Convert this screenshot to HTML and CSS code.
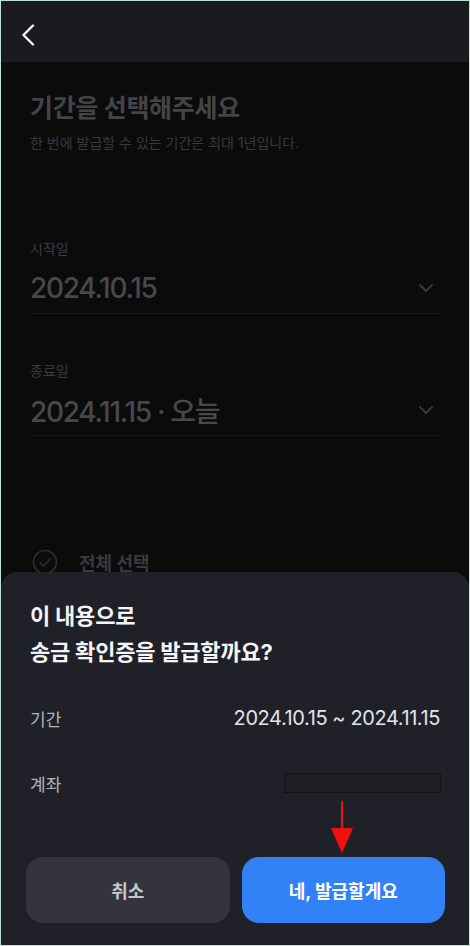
FILE: index.html
```html
<!DOCTYPE html>
<html lang="ko">
<head>
    <meta charset="UTF-8">
    <meta name="viewport" content="width=device-width, initial-scale=1.0">
    <title>송금 확인증 발급</title>
    <link rel="stylesheet" href="styles.css">
</head>
<body>
    <div class="screen">
        <header class="top-bar">
            <button class="back-btn" aria-label="뒤로">
                <svg width="14" height="22" viewBox="0 0 14 22">
                    <path d="M12 1.5 L2.5 11 L12 20.5" fill="none" stroke="#f2f2f4" stroke-width="2.4" stroke-linecap="round" stroke-linejoin="round"/>
                </svg>
            </button>
        </header>

        <main class="page">
            <h1 class="page-title">기간을 선택해주세요</h1>
            <p class="page-desc">한 번에 발급할 수 있는 기간은 최대 1년입니다.</p>

            <div class="field">
                <span class="field-label">시작일</span>
                <div class="field-row">
                    <span class="field-value">2024.10.15</span>
                    <svg class="chevron" width="14" height="8" viewBox="0 0 14 8">
                        <path d="M1 1 L7 7 L13 1" fill="none" stroke="currentColor" stroke-width="1.8" stroke-linecap="round" stroke-linejoin="round"/>
                    </svg>
                </div>
            </div>

            <div class="field">
                <span class="field-label">종료일</span>
                <div class="field-row">
                    <span class="field-value">2024.11.15 · 오늘</span>
                    <svg class="chevron" width="14" height="8" viewBox="0 0 14 8">
                        <path d="M1 1 L7 7 L13 1" fill="none" stroke="currentColor" stroke-width="1.8" stroke-linecap="round" stroke-linejoin="round"/>
                    </svg>
                </div>
            </div>

            <div class="select-all">
                <svg width="26" height="26" viewBox="0 0 26 26">
                    <circle cx="13" cy="13" r="11.5" fill="none" stroke="currentColor" stroke-width="1.6"/>
                    <path d="M8 13.5 L11.5 17 L18 10" fill="none" stroke="currentColor" stroke-width="1.6" stroke-linecap="round" stroke-linejoin="round"/>
                </svg>
                <span>전체 선택</span>
            </div>
        </main>

        <!-- confirm sheet -->
        <section class="sheet">
            <h2 class="sheet-title">이 내용으로<br>송금 확인증을 발급할까요?</h2>
            <div class="sheet-row">
                <span class="row-label">기간</span>
                <span class="row-value">2024.10.15 ~ 2024.11.15</span>
            </div>
            <div class="sheet-row">
                <span class="row-label">계좌</span>
                <span class="account-box"></span>
            </div>
            <div class="sheet-actions">
                <button class="btn btn-cancel">취소</button>
                <button class="btn btn-confirm">네, 발급할게요</button>
            </div>
            <svg class="pointer" width="24" height="52" viewBox="0 0 24 52">
                <rect x="11" y="0" width="2" height="28" fill="#f01010"/>
                <path d="M1 27 L23 27 L12 52 Z" fill="#f01010"/>
            </svg>
        </section>
    </div>
</body>
</html>
```

FILE: styles.css
```css
body {
    margin: 0;
    background-color: #0b0b0c;
    font-family: Inter, "Noto Sans CJK KR", sans-serif;
}
.screen {
    position: relative;
    width: 470px;
    height: 946px;
    box-sizing: border-box;
    border: 1px solid #bfe2d6;
    background-color: #0b0b0c;
    overflow: hidden;
    display: flex;
    flex-direction: column;
}
.top-bar {
    height: 61px;
    flex-shrink: 0;
    background-color: #1b1b1f;
    display: flex;
    align-items: flex-start;
    padding: 23px 0 0 20px;
    box-sizing: border-box;
}
.back-btn {
    background: none;
    border: none;
    padding: 0;
    display: flex;
}
.page {
    padding: 29px 29px 0;
}
.page-title {
    margin: 0;
    font-size: 25px;
    font-weight: 700;
    color: #444447;
    letter-spacing: -0.3px;
    line-height: 34px;
}
.page-desc {
    margin: 8px 0 0;
    font-size: 14px;
    color: #39393c;
    line-height: 20px;
}
.field {
    margin-top: 87px;
    display: flex;
    flex-direction: column;
}
.field + .field {
    margin-top: 48px;
}
.field-label {
    font-size: 14px;
    color: #3c3c3f;
    line-height: 18px;
}
.field-row {
    display: flex;
    align-items: center;
    justify-content: space-between;
    height: 56px;
    box-sizing: border-box;
    padding: 5px 7px 0 0;
    border-bottom: 1px solid #19191b;
}
.field-value {
    font-size: 28px;
    font-weight: 500;
    letter-spacing: -1.3px;
    color: #48484b;
}
.chevron {
    color: #3a3a3d;
}
.select-all {
    margin-top: 113px;
    display: flex;
    align-items: center;
    gap: 21px;
    padding-left: 2px;
    color: #2f2f32;
}
.select-all span {
    font-size: 18px;
    font-weight: 700;
    color: #3a3a3d;
}
.sheet {
    position: absolute;
    left: 0;
    right: 0;
    bottom: 0;
    height: 373px;
    box-sizing: border-box;
    background-color: #202128;
    border-radius: 16px 16px 0 0;
    padding: 26px 29px 22px;
    display: flex;
    flex-direction: column;
}
.sheet-title {
    margin: 0;
    font-size: 22px;
    font-weight: 700;
    color: #f4f4f6;
    line-height: 36px;
    letter-spacing: -0.2px;
}
.sheet-row {
    display: flex;
    align-items: center;
    justify-content: space-between;
    height: 24px;
    margin-top: 36px;
}
.sheet-row + .sheet-row {
    margin-top: 41px;
}
.row-label {
    font-size: 17px;
    color: #b4b5bc;
}
.row-value {
    font-size: 20px;
    color: #e4e4e8;
    letter-spacing: -0.4px;
}
.account-box {
    width: 157px;
    height: 20px;
    margin-right: -1px;
    box-sizing: border-box;
    border: 1px solid #141418;
    background-color: #1d1e24;
}
.sheet-actions {
    margin-top: auto;
    margin-left: -4px;
    margin-right: -5px;
    display: flex;
    gap: 12px;
}
.btn {
    flex: 1;
    height: 66px;
    border: none;
    border-radius: 17px;
    font-family: inherit;
    font-size: 18px;
    font-weight: 700;
}
.btn-cancel {
    background-color: #33343d;
    color: #c4c5cc;
}
.btn-confirm {
    background-color: #3182f6;
    color: #ffffff;
}
.pointer {
    position: absolute;
    left: 329px;
    top: 229px;
}
```
